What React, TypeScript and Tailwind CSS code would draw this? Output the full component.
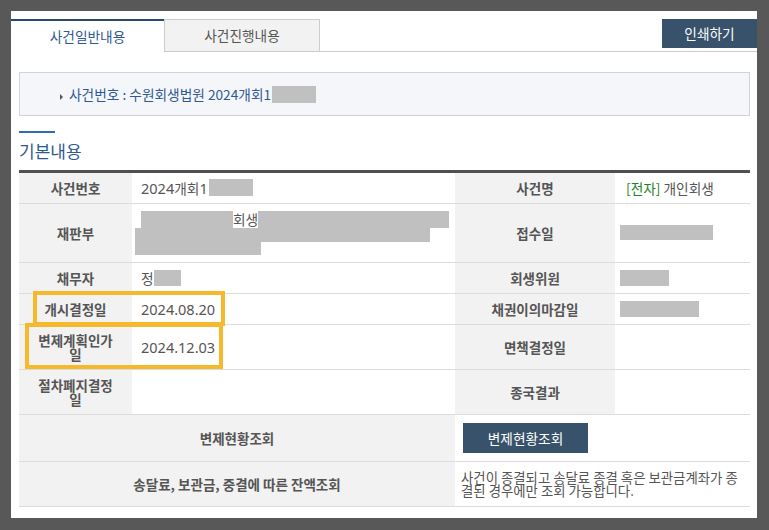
import React from "react";

// 사건 일반내용 화면 (개인회생 사건 조회)

const label =
  "bg-[#f2f2f2] text-center align-middle font-bold text-[13.5px] leading-[14px] text-[#555] px-[16px] border-b border-[#dcdcdc]";
const value =
  "align-middle px-[9px] text-[13.7px] leading-[16px] text-[#555] border-b border-[#dcdcdc]";
const date = "text-[14.5px] font-['Noto_Sans','Noto_Sans_CJK_KR',sans-serif]";

export default function App() {
  return (
    <div className="relative w-[769px] h-[530px] bg-[#585858] pt-[11px] pl-[11px] font-['Noto_Sans_CJK_KR','Noto_Sans',sans-serif]">
      <div className="w-[746px] h-[507px] bg-white">
        {/* ── Tabs ─────────────────────────────── */}
        <div className="flex pt-[8px]">
          <div className="w-[153px] h-[33px] border-t-2 border-[#2c4a6b] bg-white flex items-center justify-center text-[13.7px] text-[#2e5a92]">
            사건일반내용
          </div>
          <div className="w-[156px] h-[33px] border border-[#cccccc] bg-[#f2f2f2] flex items-center justify-center text-[13.7px] text-[#555]">
            사건진행내용
          </div>
          <div className="flex-1 h-[33px] border-b border-[#cccccc] flex justify-end items-start">
            <button className="w-[95px] h-[29px] bg-[#37526a] text-white text-[13.7px]">
              인쇄하기
            </button>
          </div>
        </div>

        <div className="pl-[8px] pr-[7px]">
          {/* ── Case number box ──────────────────── */}
          <div className="mt-[20px] h-[44px] border border-[#d0d4da] bg-[#f5f6fa] flex items-center pl-[40px]">
            <span className="w-0 h-0 border-y-[3px] border-y-transparent border-l-[3px] border-l-[#555] mt-[6px] mr-[6px]" />
            <span className="text-[13.7px] text-[#2e5a92]">
              사건번호 : 수원회생법원 2024개회1
            </span>
            <span className="ml-[1px] w-[44px] h-[17px] bg-[#c0c0c0]" />
          </div>

          {/* ── Section heading ──────────────────── */}
          <div className="mt-[15px] w-[36px] h-[2px] bg-[#2e6db4]" />
          <h2 className="mt-[7px] mb-[9px] text-[17px] leading-[21px] text-[#2e5a92]">
            기본내용
          </h2>

          {/* ── Basic info table ─────────────────── */}
          <div className="border-t-[3px] border-[#505050]">
            <table className="w-[731px] table-fixed border-collapse">
              <colgroup>
                <col className="w-[113px]" />
                <col className="w-[323px]" />
                <col className="w-[160px]" />
                <col className="w-[135px]" />
              </colgroup>
              <tbody>
                <tr className="h-[30px]">
                  <th className={label}>사건번호</th>
                  <td className={value}>
                    <div className="flex items-center">
                      <span className={date}>2024</span>개회<span className={date}>1</span>
                      <span className="ml-[1px] w-[44px] h-[17px] bg-[#c0c0c0]" />
                    </div>
                  </td>
                  <th className={label}>사건명</th>
                  <td className={value + " pl-[11px]"}>
                    <span className="text-[#1d841d]">[전자]</span> 개인회생
                  </td>
                </tr>
                <tr className="h-[59px]">
                  <th className={label}>재판부</th>
                  <td className="align-middle border-b border-[#dcdcdc] text-[13.7px] text-[#555]">
                    <div className="flex items-center h-[17px] pl-[9px]">
                      <span className="w-[92px] h-[17px] bg-[#c0c0c0]" />
                      <span className="leading-[17px]">회생</span>
                      <span className="w-[191px] h-[17px] bg-[#c0c0c0]" />
                    </div>
                    <div className="ml-[3px] w-[295px] h-[14px] bg-[#c0c0c0]" />
                    <div className="ml-[3px] w-[126px] h-[13px] bg-[#c0c0c0]" />
                  </td>
                  <th className={label}>접수일</th>
                  <td className={value + " pl-[5px]"}>
                    <div className="w-[93px] h-[15px] bg-[#c0c0c0]" />
                  </td>
                </tr>
                <tr className="h-[31px]">
                  <th className={label}>채무자</th>
                  <td className={value}>
                    <div className="flex items-center">
                      정<span className="w-[27px] h-[16px] bg-[#c0c0c0]" />
                    </div>
                  </td>
                  <th className={label}>회생위원</th>
                  <td className={value + " pl-[5px]"}>
                    <div className="w-[49px] h-[16px] bg-[#c0c0c0]" />
                  </td>
                </tr>
                <tr className="h-[31px]">
                  <th className={label}>개시결정일</th>
                  <td className={value}>
                    <span className={date}>2024.08.20</span>
                  </td>
                  <th className={label}>채권이의마감일</th>
                  <td className={value + " pl-[5px]"}>
                    <div className="w-[79px] h-[16px] bg-[#c0c0c0]" />
                  </td>
                </tr>
                <tr className="h-[45px]">
                  <th className={label}>변제계획인가일</th>
                  <td className={value}>
                    <span className={date}>2024.12.03</span>
                  </td>
                  <th className={label}>면책결정일</th>
                  <td className={value}></td>
                </tr>
                <tr className="h-[45px]">
                  <th className={label}>절차폐지결정일</th>
                  <td className={value}></td>
                  <th className={label}>종국결과</th>
                  <td className={value}></td>
                </tr>
                <tr className="h-[47px]">
                  <th colSpan={2} className={label}>
                    변제현황조회
                  </th>
                  <td colSpan={2} className={value + " pl-[8px]"}>
                    <button className="w-[125px] h-[30px] bg-[#37526a] text-white text-[13.7px]">
                      변제현황조회
                    </button>
                  </td>
                </tr>
                <tr className="h-[45px]">
                  <th colSpan={2} className={label}>
                    송달료, 보관금, 중결에 따른 잔액조회
                  </th>
                  <td
                    colSpan={2}
                    className="align-middle pl-[6px] text-[13.4px] leading-[13px] text-[#555] whitespace-nowrap border-b border-[#dcdcdc]"
                  >
                    사건이 종결되고 송달료 종결 혹은 보관금계좌가 종
                    <br />
                    결된 경우에만 조회 가능합니다.
                  </td>
                </tr>
              </tbody>
            </table>
          </div>
        </div>
      </div>

      {/* ── Highlight annotations ──────────────── */}
      <div className="absolute left-[33px] top-[291px] w-[192px] h-[35px] border-4 border-[#f6b92b]" />
      <div className="absolute left-[25px] top-[323px] w-[198px] h-[46px] border-4 border-[#f6b92b]" />
    </div>
  );
}
